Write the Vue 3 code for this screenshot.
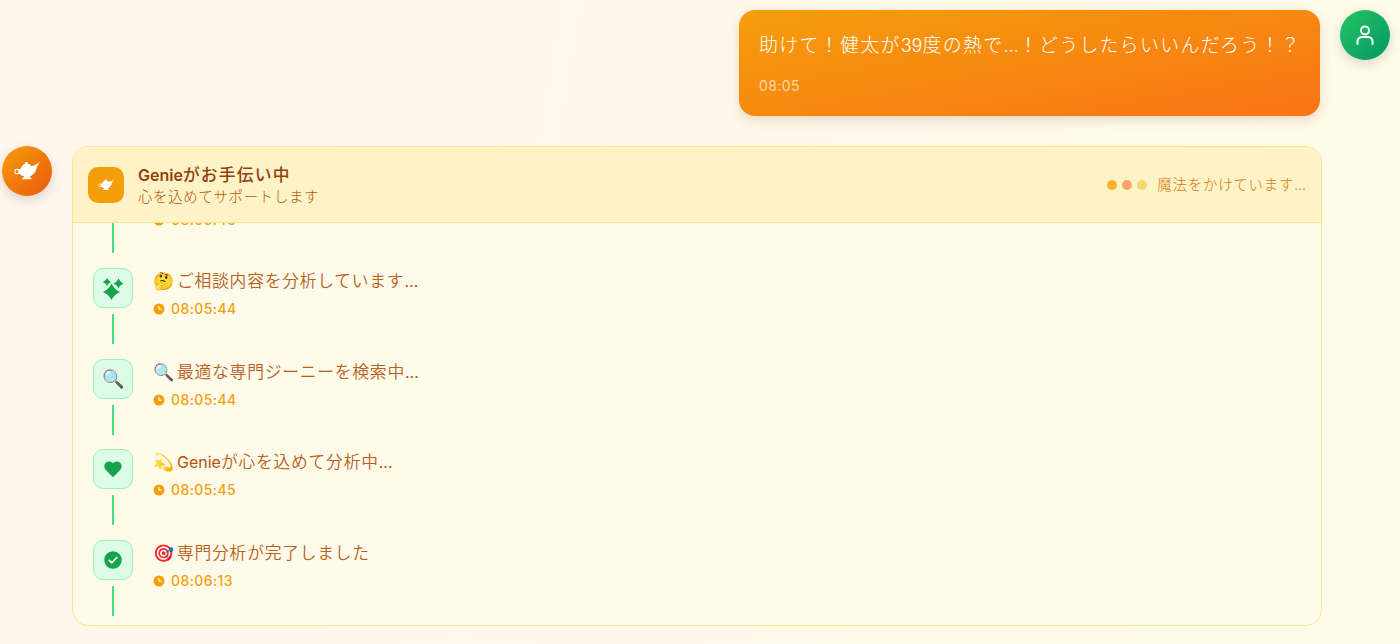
<script setup>
const lamp = 'M24 3C23 5.500 21 7.500 20.500 10.500C19.500 14 17 16 14.500 17L16.500 19.500H7L9.500 17C7 16.300 5.200 15 4.200 14L3.800 10.500C5 10.800 6.300 10.300 6.800 8.800C7.300 6.800 8.800 5.500 10.300 5.200V3.800H12.500V5.200C14 5.400 15.500 6.300 16 7.600C19 7 22 5.200 24 3Z'
const steps = [
  { id: 'a', icon: 'spark', emoji: '🚀', latin: '', text: '相談を受け付けました', dots: '', time: '08:05:43' },
  { id: 'b', icon: 'spark', emoji: '🤔', latin: '', text: 'ご相談内容を分析しています', dots: '...', time: '08:05:44' },
  { id: 'c', icon: 'glass', emoji: '🔍', latin: '', text: '最適な専門ジーニーを検索中', dots: '...', time: '08:05:44' },
  { id: 'd', icon: 'heart', emoji: '💫', latin: 'Genie', text: 'が心を込めて分析中', dots: '...', time: '08:05:45' },
  { id: 'e', icon: 'check', emoji: '🎯', latin: '', text: '専門分析が完了しました', dots: '', time: '08:06:13' }
]
</script>

<template>
  <div class="page">
    <div class="user-row">
      <div class="bubble">
        <p class="bubble-text">助けて！健太が<span class="latin">39</span>度の熱で<span class="latin">…</span>！どうしたらいいんだろう！？</p>
        <span class="bubble-time">08:05</span>
      </div>
      <div class="avatar avatar-user">
        <svg width="24" height="24" viewBox="0 0 24 24" fill="none" stroke="#fff" stroke-width="2" stroke-linecap="round">
          <circle cx="12" cy="7.500" r="4" />
          <path d="M4.500 21v-2.500A4.500 4.500 0 0 1 9 14h6a4.500 4.500 0 0 1 4.500 4.500V21" />
        </svg>
      </div>
    </div>

    <div class="bot-row">
      <div class="avatar avatar-bot">
        <svg width="26" height="26" viewBox="0 0 24 24">
          <path :d="lamp" fill="#fff" />
          <circle cx="2.800" cy="12.500" r="2.100" fill="none" stroke="#fff" stroke-width="1" />
        </svg>
      </div>

      <section class="card">
        <header class="card-head">
          <div class="head-icon">
            <svg width="16" height="16" viewBox="0 0 24 24">
              <path :d="lamp" fill="#fff" />
              <circle cx="2.800" cy="12.500" r="2.100" fill="none" stroke="#fff" stroke-width="1" />
            </svg>
          </div>
          <div class="head-text">
            <div class="head-title"><span class="latin">Genie</span>がお手伝い中</div>
            <div class="head-sub">心を込めてサポートします</div>
          </div>
          <div class="status">
            <i class="dot dot1"></i><i class="dot dot2"></i><i class="dot dot3"></i>
            <span class="status-text">魔法をかけています<span class="latin">...</span></span>
          </div>
        </header>

        <div class="card-body">
          <ul class="steps">
            <li v-for="s in steps" :key="s.id" class="step">
              <div class="rail">
                <div class="step-icon">
                  <svg v-if="s.icon === 'spark'" width="24" height="24" viewBox="0 0 24 24" fill="#16a34a">
                    <path d="M10.500 7.500Q13.200 13.300 19 16Q13.200 18.700 10.500 24Q7.800 18.700 2 16Q7.800 13.300 10.500 7.500Z" />
                    <path d="M17.500 2.500Q19 6 22.500 7.500Q19 9 17.500 12.500Q16 9 12.500 7.500Q16 6 17.500 2.500Z" />
                    <path d="M6 2Q7.200 4.800 10 6Q7.200 7.200 6 10Q4.800 7.200 2 6Q4.800 4.800 6 2Z" />
                  </svg>
                  <span v-else-if="s.icon === 'glass'" class="glass-icon">🔍</span>
                  <svg v-else-if="s.icon === 'heart'" width="20" height="20" viewBox="0 0 24 24" fill="#16a34a">
                    <path d="M12 22 3.400 13.300C.9 10.800.9 6.900 3.300 4.500c2.400-2.300 6.100-2.200 8.700.6 2.600-2.800 6.300-2.900 8.700-.6 2.400 2.400 2.400 6.300-.1 8.800Z" />
                  </svg>
                  <svg v-else width="20" height="20" viewBox="0 0 24 24">
                    <circle cx="12" cy="12" r="10.500" fill="#16a34a" />
                    <path d="m7.500 12.500 3 3 6-6.500" fill="none" stroke="#fff" stroke-width="2" stroke-linecap="round" stroke-linejoin="round" />
                  </svg>
                </div>
                <div class="rail-line"></div>
              </div>
              <div class="step-copy">
                <p class="step-text"><span class="emoji">{{ s.emoji }}</span><span class="latin">{{ s.latin }}</span>{{ s.text }}<span class="latin">{{ s.dots }}</span></p>
                <p class="step-time">
                  <svg width="12" height="12" viewBox="0 0 12 12">
                    <circle cx="6" cy="6" r="5.500" fill="#f59e0b" />
                    <path d="M6 3v3.200h2.500" fill="none" stroke="#fffbeb" stroke-width="1.200" />
                  </svg>
                  {{ s.time }}
                </p>
              </div>
            </li>
          </ul>
        </div>
      </section>
    </div>
  </div>
</template>

<style>
html, body { margin: 0; height: 100%; overflow: hidden; }
</style>

<style scoped>
.page {
  box-sizing: border-box;
  height: 644px;
  overflow: hidden;
  padding: 10px 10px 0 2px;
  background: linear-gradient(100deg, #fff6ec, #fffbe9);
  font-family: Inter, "Noto Sans CJK JP", sans-serif;
}
.latin { letter-spacing: 0; }
.user-row { display: flex; justify-content: flex-end; gap: 20px; margin-bottom: 30px; }
.bubble {
  box-sizing: border-box;
  width: 581px;
  height: 106px;
  padding: 21px 20px 0;
  border-radius: 16px;
  color: #fff;
  background: linear-gradient(to bottom right, #f59e0b, #f97316);
  box-shadow: 0 4px 12px rgba(120, 70, 10, 0.18);
}
.bubble-text { margin: 0 0 15px; font-size: 18.900px; letter-spacing: 1.350px; line-height: 30px; white-space: nowrap; font-weight: 300; }
.bubble-text .latin { font-size: 18px; }
.bubble-time { display: block; font-size: 14px; letter-spacing: 0.400px; line-height: 20px; color: #fed7aa; }
.avatar {
  flex: none;
  width: 50px;
  height: 50px;
  border-radius: 50%;
  display: flex;
  align-items: center;
  justify-content: center;
  box-shadow: 0 4px 12px rgba(0, 0, 0, 0.14);
}
.avatar-user { background: linear-gradient(to bottom right, #22c55e, #059669); }
.avatar-bot { background: linear-gradient(to bottom right, #f59e0b, #ea580c); }
.bot-row { display: flex; gap: 20px; align-items: flex-start; }
.card {
  box-sizing: border-box;
  width: 1250px;
  height: 480px;
  border: 1px solid #fde68a;
  border-radius: 16px;
  overflow: hidden;
  background: #fffbeb;
  display: flex;
  flex-direction: column;
}
.card-head {
  flex: none;
  box-sizing: border-box;
  height: 76px;
  display: flex;
  align-items: center;
  gap: 14px;
  padding: 0 15px;
  background: #fef3c7;
  border-bottom: 1px solid #fde68a;
}
.head-icon {
  width: 36px;
  height: 36px;
  border-radius: 10px;
  background: #f59e0b;
  display: flex;
  align-items: center;
  justify-content: center;
}
.head-text { flex: 1; }
.head-title { font-size: 16.800px; letter-spacing: 1.200px; line-height: 24px; font-weight: 500; color: #92400e; }
.head-title .latin { font-size: 16px; font-weight: 600; }
.head-sub { font-size: 14.500px; letter-spacing: 0.600px; line-height: 20px; font-weight: 300; color: #b45309; }
.status { display: flex; align-items: center; gap: 5px; }
.dot { width: 10px; height: 10px; border-radius: 50%; }
.dot1 { background: #fbb034; }
.dot2 { background: #fda56a; }
.dot3 { background: #f6d873; }
.status-text { margin-left: 5px; font-size: 14.500px; letter-spacing: 0.700px; line-height: 20px; font-weight: 300; color: #d97706; }
.status-text .latin { font-size: 14px; }
.card-body { flex: 1; overflow: hidden; padding-left: 20px; }
.steps { list-style: none; margin: -45.670px 0 0; padding: 0; }
.step { display: flex; gap: 20px; height: 90.670px; }
.rail { width: 40px; display: flex; flex-direction: column; align-items: center; gap: 6px; }
.step-icon {
  box-sizing: border-box;
  width: 40px;
  height: 40px;
  border: 1px solid #9ff0b8;
  border-radius: 10px;
  background: #dcfce7;
  display: flex;
  align-items: center;
  justify-content: center;
}
.glass-icon { font-size: 18px; line-height: 1; }
.rail-line { width: 2px; height: 30px; background: #4ade80; }
.step-copy { padding-top: 1px; }
.step:first-child .step-copy { padding-top: 3px; }
.step-text { margin: 0 0 6px; font-size: 16.800px; letter-spacing: 0.750px; line-height: 24px; font-weight: 350; color: #b8611c; }
.step-text .latin { font-size: 16px; font-weight: 400; color: #b45309; }
.emoji { display: inline-block; width: 24px; font-size: 17px; letter-spacing: 0; }
.step-time { margin: 0; display: flex; align-items: center; gap: 6px; font-size: 14px; letter-spacing: 0.400px; line-height: 20px; color: #f59e0b; font-weight: 500; }
</style>
